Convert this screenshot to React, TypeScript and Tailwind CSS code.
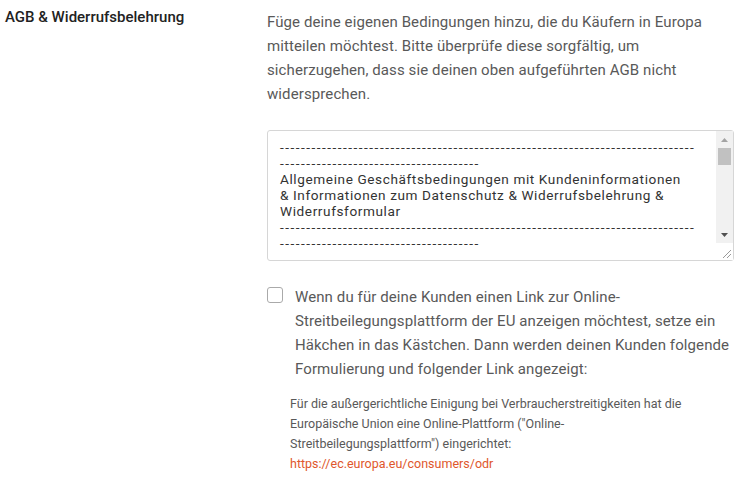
import React from "react";

const dashes = "-".repeat(117);

export default function App() {
  return (
    <div
      className="flex w-[742px] h-[478px] overflow-hidden bg-white text-[#595959]"
      style={{ fontFamily: "Roboto, 'Liberation Sans', sans-serif" }}
    >
      <div className="w-[262px] shrink-0 pl-[5px] pt-[7px]">
        <h3 className="text-[15px] font-medium leading-[20px] text-[#222]">
          AGB &amp; Widerrufsbelehrung
        </h3>
      </div>

      <div className="w-[475px] shrink-0 pl-[5px]">
        <p className="pt-[10px] pr-[8px] text-[15px] leading-[24px] tracking-[0.1px]">
          Füge deine eigenen Bedingungen hinzu, die du Käufern in Europa
          mitteilen möchtest. Bitte überprüfe diese sorgfältig, um
          sicherzugehen, dass sie deinen oben aufgeführten AGB nicht
          widersprechen.
        </p>

        <div className="mt-[24px] flex h-[131px] w-[467px] rounded-[3px] border border-[#d6d6d6] bg-white">
          <div className="flex-1 overflow-hidden pl-[12px] pr-[16px] pt-[8px] text-[13.6px] leading-[16px] tracking-[0.6px] text-[#333]">
            <div className="break-all tracking-[1.5px]">{dashes}</div>
            <div>
              Allgemeine Geschäftsbedingungen mit Kundeninformationen
              <br />
              &amp; Informationen zum Datenschutz &amp; Widerrufsbelehrung &amp;
              <br />
              Widerrufsformular
            </div>
            <div className="break-all tracking-[1.5px]">{dashes}</div>
          </div>
          <div className="flex w-[17px] shrink-0 flex-col bg-[#f1f1f1]">
            <div className="flex h-[17px] items-center justify-center">
              <svg width="7" height="4" viewBox="0 0 7 4">
                <path d="M0 4 L3.5 0 L7 4 Z" fill="#a3a3a3" />
              </svg>
            </div>
            <div className="mx-[2px] h-[17px] bg-[#c1c1c1]" />
            <div className="flex-1" />
            <div className="flex h-[17px] items-center justify-center">
              <svg width="7" height="4" viewBox="0 0 7 4">
                <path d="M0 0 L7 0 L3.5 4 Z" fill="#505050" />
              </svg>
            </div>
            <div className="flex h-[17px] items-end justify-end bg-white pb-[2px] pr-[2px]">
              <svg width="9" height="9" viewBox="0 0 9 9">
                <path d="M9 1 L1 9 M9 5 L5 9" stroke="#9a9a9a" strokeWidth="1" />
              </svg>
            </div>
          </div>
        </div>

        <div className="mt-[24px] flex gap-[12px]">
          <div className="mt-[2px] h-[16px] w-[16px] shrink-0 rounded-[3px] border border-[#aaa] bg-white" />
          <p className="text-[15px] leading-[24px] tracking-[0.1px]">
            Wenn du für deine Kunden einen Link zur Online-
            <br />
            Streitbeilegungsplattform der EU anzeigen möchtest, setze ein
            Häkchen in das Kästchen. Dann werden deinen Kunden folgende
            Formulierung und folgender Link angezeigt:
          </p>
        </div>

        <div className="mt-[13px] pl-[23px] pr-[20px] text-[12.5px] leading-[20px]">
          <p>
            Für die außergerichtliche Einigung bei Verbraucherstreitigkeiten hat
            die Europäische Union eine Online-Plattform ("Online-
            <br />
            Streitbeilegungsplattform") eingerichtet:
          </p>
          <a href="#" className="text-[#e0572c]">
            https://ec.europa.eu/consumers/odr
          </a>
        </div>
      </div>
    </div>
  );
}
